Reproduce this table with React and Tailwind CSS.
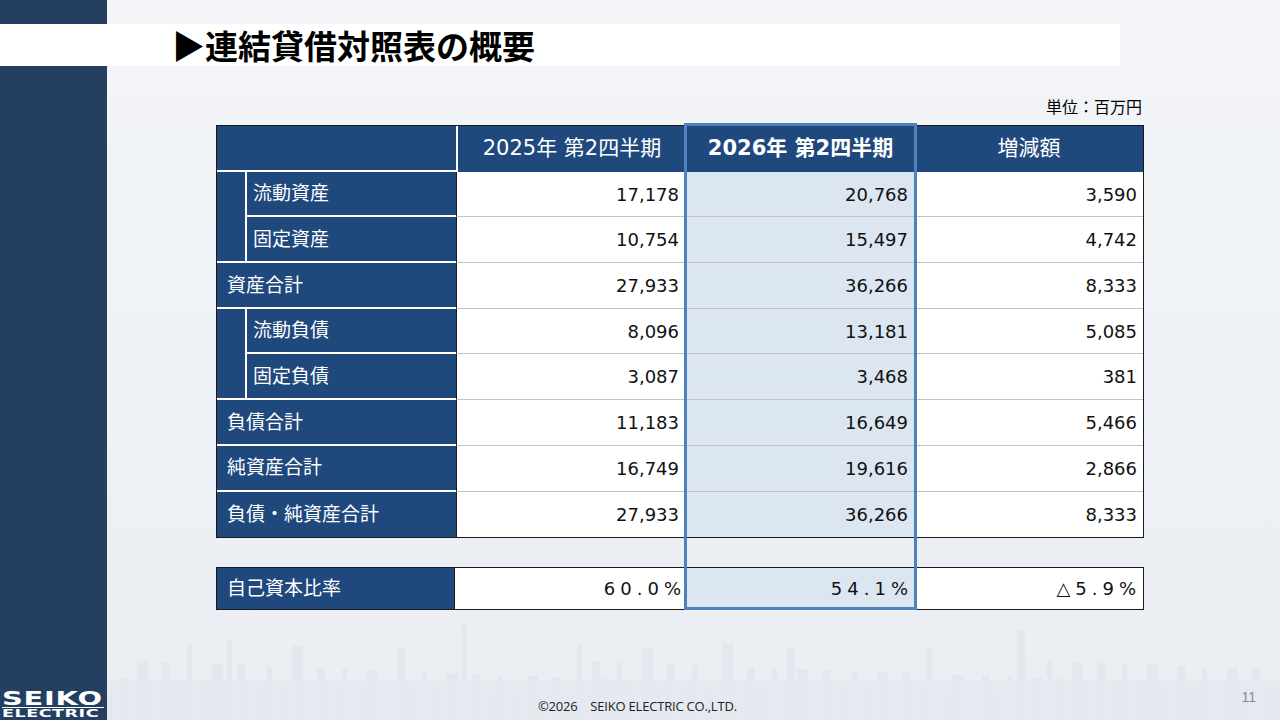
import React from 'react'

const rows = [
  { label: '流動資産', sub: true, a: '17,178', b: '20,768', c: '3,590' },
  { label: '固定資産', sub: true, a: '10,754', b: '15,497', c: '4,742' },
  { label: '資産合計', a: '27,933', b: '36,266', c: '8,333' },
  { label: '流動負債', sub: true, a: '8,096', b: '13,181', c: '5,085' },
  { label: '固定負債', sub: true, a: '3,087', b: '3,468', c: '381' },
  { label: '負債合計', a: '11,183', b: '16,649', c: '5,466' },
  { label: '純資産合計', a: '16,749', b: '19,616', c: '2,866' },
  { label: '負債・純資産合計', a: '27,933', b: '36,266', c: '8,333' },
]

// faint city skyline behind the lower part of the slide
const Skyline = () => {
  const blocks = []
  for (let i = 0; i < 90; i++) {
    const x = i * 13 + ((i * 7) % 5)
    const tall = [6, 9, 14, 22, 27, 36, 41, 47, 52, 63, 70].includes(i)
    const h = tall ? 70 + ((i * 11) % 30) : 25 + ((i * 17) % 35)
    const w = 5 + ((i * 3) % 9)
    blocks.push([x, h, w])
  }
  return (
    <svg className="absolute left-0 bottom-0 w-[1173px] h-[110px]" viewBox="0 0 1173 110">
      {blocks.map(([x, h, w], i) => (
        <rect key={i} x={x} y={110 - h} width={w} height={h} fill="#dfe5ec" opacity="0.7" />
      ))}
      <rect x="0" y="70" width="1173" height="40" fill="#e2e8ef" opacity="0.8" />
    </svg>
  )
}

const Logo = () => (
  <div className="w-[107px] pb-[2px] pl-[2px] text-white" style={{ fontFamily: '"DejaVu Sans", sans-serif' }}>
    <div className="text-[19px] leading-[15px] font-black origin-left scale-x-[1.52] tracking-[0.5px]">SEIKO</div>
    <div className="h-[1px] w-[102px] bg-white my-[1px]" />
    <div className="text-[11px] leading-[9px] font-black origin-left scale-x-[1.6] tracking-[0.3px]">ELECTRIC</div>
  </div>
)

const App = () => {
  const navy = 'bg-[#1f497d]'

  return (
    <div
      className="w-[1280px] h-[720px] overflow-hidden flex flex-col bg-gradient-to-b from-[#f3f5f8] via-[#eef1f5] to-[#eaeef3]"
      style={{ fontFamily: '"DejaVu Sans", "Noto Sans CJK JP", sans-serif' }}
    >
      {/* top strip */}
      <div className="h-[24px] flex">
        <div className="w-[107px] bg-[#243f60]" />
      </div>

      {/* title bar */}
      <div className="h-[42px] w-[1120px] bg-white flex items-center pl-[172px]">
        <h1
          className="text-[33px] font-bold text-black leading-none"
          style={{ fontFamily: '"Noto Sans CJK JP", sans-serif' }}
        >
          ▶連結貸借対照表の概要
        </h1>
      </div>

      <div className="flex flex-1">
        {/* sidebar */}
        <aside className="w-[107px] bg-[#243f60] flex flex-col justify-end">
          <Logo />
        </aside>

        <main className="flex-1 relative flex flex-col">
          <Skyline />

          <div className="relative ml-[109px] w-[928px] pt-[31px]">
            <p className="text-right text-[16px] leading-[22px] text-black pr-[2px] mb-[6px]">単位：百万円</p>

            <div className="relative">
              {/* main table */}
              <div className="border border-[#1a1a1a] bg-white">
                <div className="grid grid-cols-[30px_209px_230px_229px_228px] auto-rows-[45.7px]">
                  <div className={`col-span-2 ${navy} border-b-2 border-white`} />
                  <div className={`${navy} border-l-2 border-white flex items-center justify-center text-white text-[21px]`}>
                    2025年 第2四半期
                  </div>
                  <div className={`${navy} flex items-center justify-center text-white text-[21px] font-bold`}>
                    2026年 第2四半期
                  </div>
                  <div className={`${navy} flex items-center justify-center text-white text-[21px]`}>増減額</div>

                  {rows.map((r, i) => {
                    const last = i === rows.length - 1
                    const cells = []
                    if (r.sub && (i === 0 || i === 3)) {
                      cells.push(
                        <div key="ind" className={`row-span-2 ${navy} border-r-2 border-b-2 border-white`} />
                      )
                    }
                    cells.push(
                      <div
                        key="lab"
                        className={`${r.sub ? 'pl-[6px]' : 'col-span-2 pl-[10px]'} ${navy} ${last ? '' : 'border-b-2 border-white'} flex items-center text-white text-[19px]`}
                      >
                        {r.label}
                      </div>
                    )
                    cells.push(
                      <div key="a" className={`border-l border-[#1a1a1a] ${last ? '' : 'border-b border-b-[#c3c3c3]'} flex items-center justify-end pr-[7px] text-[18px] text-[#111]`}>
                        {r.a}
                      </div>,
                      <div key="b" className={`bg-[#dce6f1] ${last ? '' : 'border-b border-b-[#c3c3c3]'} flex items-center justify-end pr-[7px] text-[18px] text-[#111]`}>
                        {r.b}
                      </div>,
                      <div key="c" className={`${last ? '' : 'border-b border-b-[#c3c3c3]'} flex items-center justify-end pr-[6px] text-[18px] text-[#111]`}>
                        {r.c}
                      </div>
                    )
                    return cells
                  })}
                </div>
              </div>

              {/* equity ratio */}
              <div className="mt-[29px] border border-[#1a1a1a] grid grid-cols-[237px_232px_229px_228px] h-[43px] text-[18px] text-[#111]">
                <div className={`${navy} flex items-center pl-[10px] text-white text-[19px]`}>自己資本比率</div>
                <div className="bg-white border-l border-[#1a1a1a] flex items-center justify-end pr-0 tracking-[5px]">60.0%</div>
                <div className="bg-[#dce6f1] border-l border-[#1a1a1a] flex items-center justify-end pr-[2px] tracking-[5px]">54.1%</div>
                <div className="bg-white border-l border-[#1a1a1a] flex items-center justify-end pr-[2px] tracking-[5px]">△5.9%</div>
              </div>

              {/* highlight around current quarter */}
              <div className="absolute left-[468px] top-[-2px] w-[233px] h-[487px] border-[3px] border-[#4f81bd] pointer-events-none" />
            </div>
          </div>

          {/* footer */}
          <footer className="relative mt-auto h-[40px] flex items-end pb-[6px]">
            <span
              className="ml-[431px] text-[13px] leading-[16px] text-[#222] tracking-[-0.2px]"
              style={{ fontFamily: '"Open Sans", sans-serif' }}
            >
              ©2026　SEIKO ELECTRIC CO.,LTD.
            </span>
            <span className="ml-auto mr-[24px] mb-[9px] text-[14px] leading-[16px] text-[#8a8a8a]" style={{ fontFamily: '"Liberation Sans", sans-serif' }}>
              11
            </span>
          </footer>
        </main>
      </div>
    </div>
  )
}

export default App
